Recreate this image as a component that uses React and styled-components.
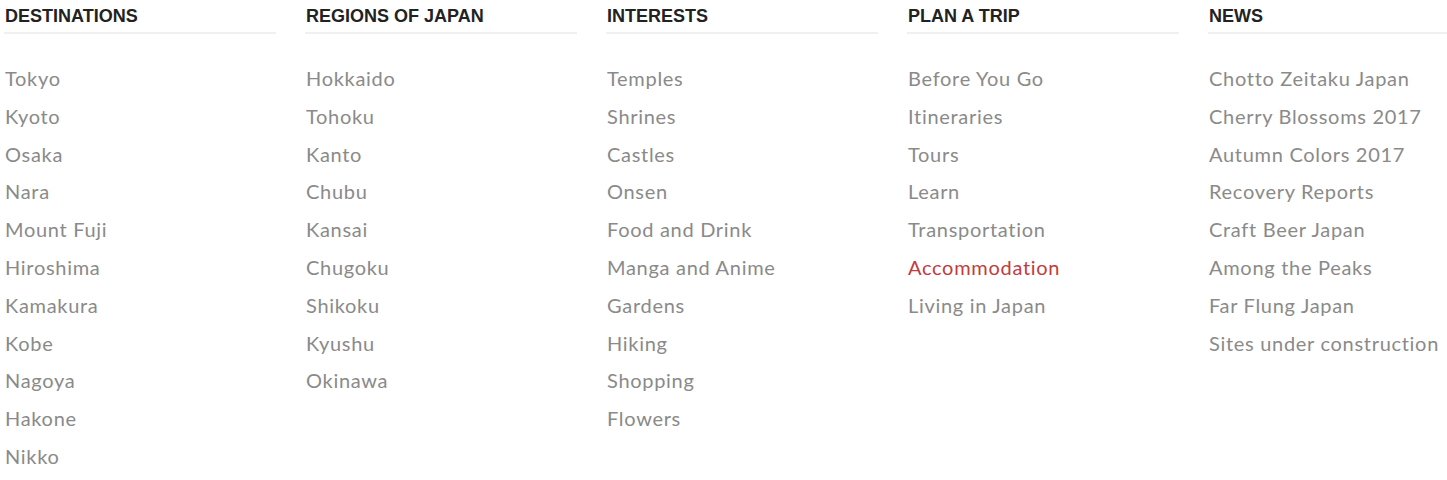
import React from 'react'
import styled, { createGlobalStyle } from 'styled-components'

const GlobalStyle = createGlobalStyle`
  html, body {
    margin: 0;
    padding: 0;
    background: #fff;
    overflow: hidden;
  }
`

const columns = [
  {
    title: 'Destinations',
    links: ['Tokyo', 'Kyoto', 'Osaka', 'Nara', 'Mount Fuji', 'Hiroshima', 'Kamakura', 'Kobe', 'Nagoya', 'Hakone', 'Nikko'],
  },
  {
    title: 'Regions of Japan',
    links: ['Hokkaido', 'Tohoku', 'Kanto', 'Chubu', 'Kansai', 'Chugoku', 'Shikoku', 'Kyushu', 'Okinawa'],
  },
  {
    title: 'Interests',
    links: ['Temples', 'Shrines', 'Castles', 'Onsen', 'Food and Drink', 'Manga and Anime', 'Gardens', 'Hiking', 'Shopping', 'Flowers'],
  },
  {
    title: 'Plan a Trip',
    links: ['Before You Go', 'Itineraries', 'Tours', 'Learn', 'Transportation', 'Accommodation', 'Living in Japan'],
    active: 'Accommodation',
  },
  {
    title: 'News',
    links: ['Chotto Zeitaku Japan', 'Cherry Blossoms 2017', 'Autumn Colors 2017', 'Recovery Reports', 'Craft Beer Japan', 'Among the Peaks', 'Far Flung Japan', 'Sites under construction'],
  },
]

function App() {
  return (
    <>
      <GlobalStyle />
      <Menu>
        {columns.map(col => (
          <Column key={col.title}>
            <Heading>{col.title}</Heading>
            <LinkList>
              {col.links.map(l => (
                <li key={l}>
                  <MenuLink href="#" $active={l === col.active}>{l}</MenuLink>
                </li>
              ))}
            </LinkList>
          </Column>
        ))}
      </Menu>
    </>
  )
}

export default App

const Menu = styled.nav`
  display: grid;
  grid-template-columns: repeat(5, 272px);
  column-gap: 29px;
  padding: 0 0 0 4px;
  width: 1600px;
  box-sizing: border-box;
`

const Column = styled.div`
  display: flex;
  flex-direction: column;
`

const Heading = styled.h3`
  margin: 0;
  padding: 6px 0 0 1px;
  height: 26px;
  border-bottom: 2px solid #f0f0f0;
  font-family: "Liberation Sans", Arial, sans-serif;
  font-weight: 700;
  font-size: 18px;
  line-height: 20px;
  color: #222;
  text-transform: uppercase;
`

const LinkList = styled.ul`
  list-style: none;
  margin: 0;
  padding: 26px 0 0 1px;
  li {
    height: 37.8px;
    line-height: 37.8px;
  }
`

const MenuLink = styled.a`
  font-family: Lato, "Open Sans", sans-serif;
  font-size: 20px;
  letter-spacing: 0.7px;
  color: ${p => (p.$active ? '#c23b3e' : '#8a8a8a')};
  text-decoration: none;
`
